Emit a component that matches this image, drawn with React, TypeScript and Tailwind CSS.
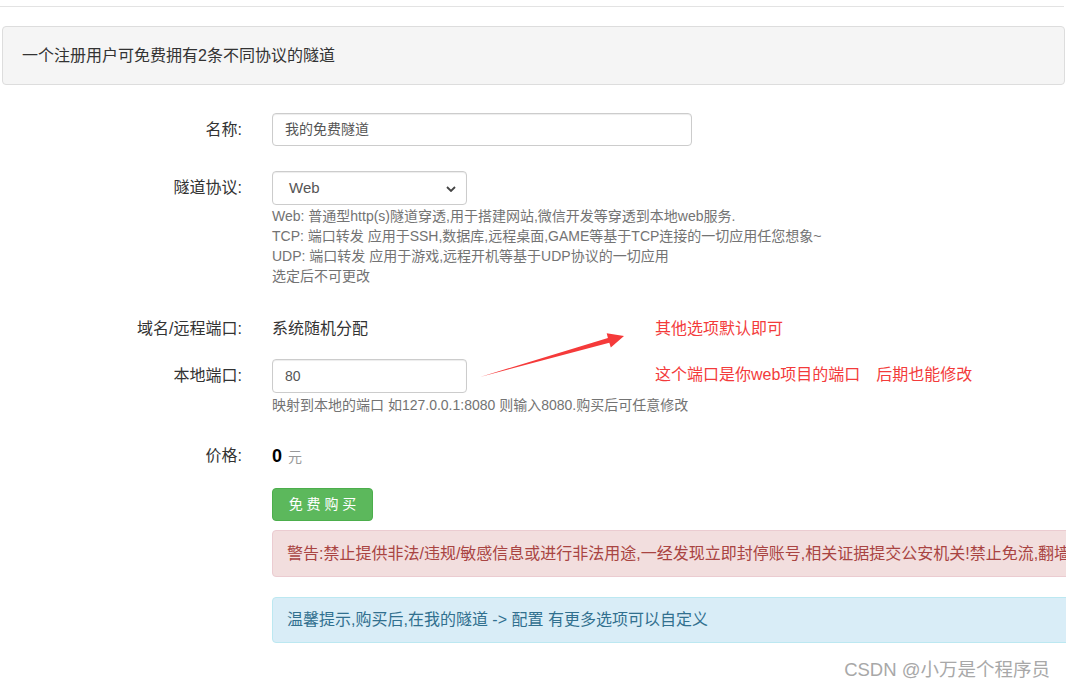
import React from 'react';

const font = "font-['Liberation_Sans','Noto_Sans_CJK_SC',sans-serif]";

const Label: React.FC<{ children: React.ReactNode }> = ({ children }) => (
  <div className="w-[242px] shrink-0 text-right text-[16px] leading-[20px] text-[#333]">{children}</div>
);

const Help: React.FC<{ children: React.ReactNode }> = ({ children }) => (
  <div className="text-[14px] leading-[20px] text-[#737373]">{children}</div>
);

const App: React.FC = () => {
  return (
    <div className={`relative w-[1066px] h-[691px] overflow-hidden bg-white ${font}`}>
      <div className="pt-[6px]">
        <div className="w-[1064px] border-t border-[#e3e3e3]" />
      </div>

      <div className="mt-[19px] ml-[2px] w-[1063px] h-[59px] border border-[#dddddd] rounded bg-[#f5f5f5] pl-[19px] flex items-center text-[16px] text-[#333]">
        一个注册用户可免费拥有2条不同协议的隧道
      </div>

      {/* 名称 */}
      <div className="mt-[28px] flex items-center">
        <Label>名称:</Label>
        <div className="ml-[30px]">
          <div className="w-[420px] h-[33px] border border-[#cccccc] rounded flex items-center pl-[12px] text-[14px] text-[#555] shadow-[inset_0_1px_1px_rgba(0,0,0,0.075)]">
            我的免费隧道
          </div>
        </div>
      </div>

      {/* 隧道协议 */}
      <div className="mt-[25px] flex items-start">
        <div className="h-[34px] flex items-center">
          <Label>隧道协议:</Label>
        </div>
        <div className="ml-[30px]">
          <div className="w-[195px] h-[34px] border border-[#cccccc] rounded flex items-center justify-between pl-[16px] pr-[10px] text-[15px] text-[#555] shadow-[inset_0_1px_1px_rgba(0,0,0,0.075)]">
            <span>Web</span>
            <svg width="10" height="6" viewBox="0 0 10 6" className="mt-[1px]">
              <path d="M1 1 L5 5 L9 1" fill="none" stroke="#444" strokeWidth="1.8" />
            </svg>
          </div>
          <div className="mt-[1px]">
            <Help>Web: 普通型http(s)隧道穿透,用于搭建网站,微信开发等穿透到本地web服务.</Help>
            <Help>TCP: 端口转发 应用于SSH,数据库,远程桌面,GAME等基于TCP连接的一切应用任您想象~</Help>
            <Help>UDP: 端口转发 应用于游戏,远程开机等基于UDP协议的一切应用</Help>
            <Help>选定后不可更改</Help>
          </div>
        </div>
      </div>

      {/* 域名/远程端口 */}
      <div className="mt-[33px] flex items-center">
        <Label>域名/远程端口:</Label>
        <div className="ml-[30px] text-[16px] leading-[20px] text-[#333]">系统随机分配</div>
      </div>

      {/* 本地端口 */}
      <div className="mt-[20px] flex items-start">
        <div className="h-[34px] flex items-center">
          <Label>本地端口:</Label>
        </div>
        <div className="ml-[30px]">
          <div className="w-[195px] h-[34px] border border-[#cccccc] rounded flex items-center pl-[12px] text-[14px] text-[#555] shadow-[inset_0_1px_1px_rgba(0,0,0,0.075)]">
            80
          </div>
          <div className="mt-[2px]">
            <Help>映射到本地的端口 如127.0.0.1:8080 则输入8080.购买后可任意修改</Help>
          </div>
        </div>
      </div>

      {/* 价格 */}
      <div className="mt-[29px] flex items-center h-[24px]">
        <Label>价格:</Label>
        <div className="ml-[30px] flex items-baseline">
          <span className="text-[18px] font-bold text-black">0</span>
          <span className="ml-[6px] text-[14px] text-[#999]">元</span>
        </div>
      </div>

      <div className="ml-[272px] mt-[20px]">
        <button className="w-[101px] h-[33px] rounded bg-[#5cb85c] border border-[#4cae4c] text-white text-[14px] flex items-center justify-center">
          免 费 购 买
        </button>
      </div>

      <div className="ml-[272px] mt-[9px] w-[840px] h-[47px] rounded border border-[#ebccd1] bg-[#f2dede] text-[#a94442] text-[16px] flex items-center pl-[14px] whitespace-nowrap">
        警告:禁止提供非法/违规/敏感信息或进行非法用途,一经发现立即封停账号,相关证据提交公安机关!禁止免流,翻墙
      </div>

      <div className="ml-[272px] mt-[20px] w-[840px] h-[46px] rounded border border-[#bce8f1] bg-[#d9edf7] text-[#31708f] text-[16px] flex items-center pl-[14px] whitespace-nowrap">
        温馨提示,购买后,在我的隧道 -&gt; 配置 有更多选项可以自定义
      </div>

      {/* annotations */}
      <svg className="absolute left-[470px] top-[320px]" width="170" height="70" viewBox="0 0 170 70">
        <polygon points="10,57 137.9,18 136.7,13.2 154,16 140.8,27.6 139.3,22.8" fill="#f53a3a" />
      </svg>
      <div className="absolute left-[655px] top-[319px] text-[16px] leading-[20px] text-[#f33b3b]">其他选项默认即可</div>
      <div className="absolute left-[655px] top-[365px] text-[16px] leading-[20px] text-[#f33b3b] whitespace-nowrap">
        这个端口是你web项目的端口<span className="ml-[16px]">后期也能修改</span>
      </div>

      <div className="absolute right-[16px] top-[658px] text-[18.5px] leading-[24px] text-[#a8a8a8] whitespace-nowrap">
        CSDN @小万是个程序员
      </div>
    </div>
  );
};

export default App;
